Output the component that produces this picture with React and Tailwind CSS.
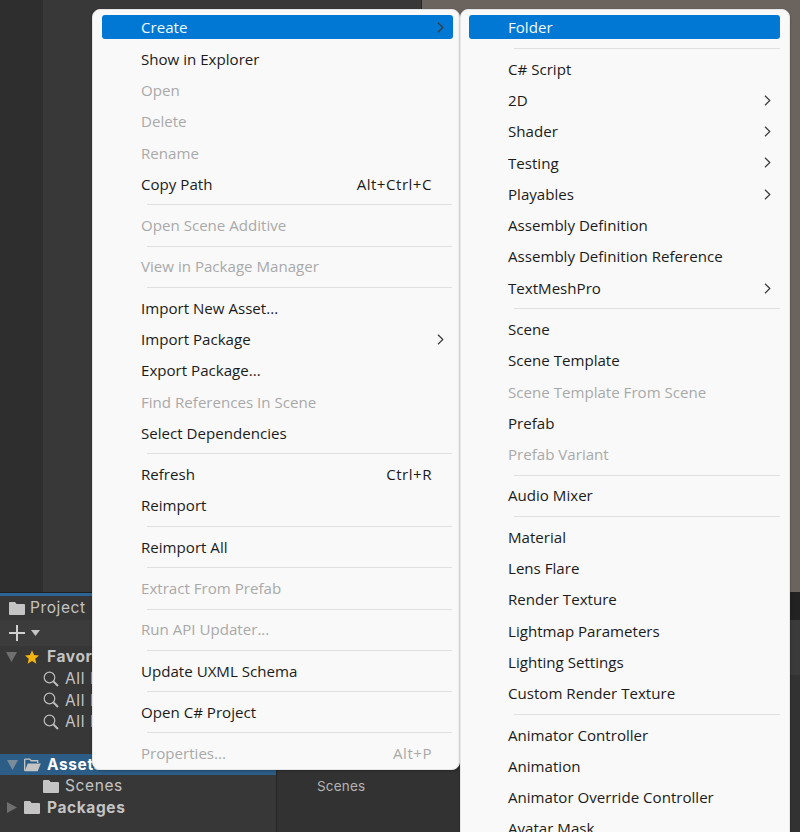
const mainItems = [
  { label: 'Create', arrow: true, active: true },
  { label: 'Show in Explorer' },
  { label: 'Open', off: true },
  { label: 'Delete', off: true },
  { label: 'Rename', off: true },
  { label: 'Copy Path', keys: 'Alt+Ctrl+C' },
  { sep: true },
  { label: 'Open Scene Additive', off: true },
  { sep: true },
  { label: 'View in Package Manager', off: true },
  { sep: true },
  { label: 'Import New Asset...' },
  { label: 'Import Package', arrow: true },
  { label: 'Export Package...' },
  { label: 'Find References In Scene', off: true },
  { label: 'Select Dependencies' },
  { sep: true },
  { label: 'Refresh', keys: 'Ctrl+R' },
  { label: 'Reimport' },
  { sep: true },
  { label: 'Reimport All' },
  { sep: true },
  { label: 'Extract From Prefab', off: true },
  { sep: true },
  { label: 'Run API Updater...', off: true },
  { sep: true },
  { label: 'Update UXML Schema' },
  { sep: true },
  { label: 'Open C# Project' },
  { sep: true },
  { label: 'Properties...', keys: 'Alt+P', off: true },
];

const subItems = [
  { label: 'Folder', active: true },
  { sep: true },
  { label: 'C# Script' },
  { label: '2D', arrow: true },
  { label: 'Shader', arrow: true },
  { label: 'Testing', arrow: true },
  { label: 'Playables', arrow: true },
  { label: 'Assembly Definition' },
  { label: 'Assembly Definition Reference' },
  { label: 'TextMeshPro', arrow: true },
  { sep: true },
  { label: 'Scene' },
  { label: 'Scene Template' },
  { label: 'Scene Template From Scene', off: true },
  { label: 'Prefab' },
  { label: 'Prefab Variant', off: true },
  { sep: true },
  { label: 'Audio Mixer' },
  { sep: true },
  { label: 'Material' },
  { label: 'Lens Flare' },
  { label: 'Render Texture' },
  { label: 'Lightmap Parameters' },
  { label: 'Lighting Settings' },
  { label: 'Custom Render Texture' },
  { sep: true },
  { label: 'Animator Controller' },
  { label: 'Animation' },
  { label: 'Animator Override Controller' },
  { label: 'Avatar Mask' },
];

function Chevron() {
  return (
    <svg width="7" height="11" viewBox="0 0 7 11" fill="none" stroke="currentColor" strokeWidth="1.2" className="text-[#3a3a3a]">
      <path d="M1 0.8 L5.8 5.5 L1 10.2" />
    </svg>
  );
}

function MenuRow({ item, sepRight }) {
  if (item.sep) {
    return <div className={`h-[10px] flex items-center pl-[45px] ${sepRight}`}><div className="h-px w-full bg-[#e0e0e0]"></div></div>;
  }
  const tone = item.active ? 'bg-[#0078d4] text-[#f2f8fd]' : item.off ? 'text-[#a9a9a9]' : 'text-[#1b1b1b]';
  return (
    <div className="h-[31.3px] flex items-center">
      <div className={`h-6 w-full mb-[1.3px] pt-[1.3px] rounded-[3px] flex items-center pl-[39px] pr-[9px] ${tone}`}>
        <span className="flex-1 whitespace-nowrap">{item.label}</span>
        {item.keys && <span className="pr-3 whitespace-nowrap tracking-[0.5px]">{item.keys}</span>}
        {item.arrow && <Chevron />}
      </div>
    </div>
  );
}

function FolderIcon({ className }) {
  return (
    <svg viewBox="0 0 16 13" className={className} fill="#c4c4c4">
      <path d="M0 1 Q0 0 1 0 H6 L7.5 2 H15 Q16 2 16 3 V12 Q16 13 15 13 H1 Q0 13 0 12 Z" />
    </svg>
  );
}

function OpenFolderIcon() {
  return (
    <svg viewBox="0 0 18 14" className="w-[17px] h-[14px]" fill="none">
      <path d="M0.7 13 V1.5 Q0.7 0.7 1.5 0.7 H6 L7.5 2.5 H14.5 V5" stroke="#c4c4c4" strokeWidth="1.4" />
      <path d="M0.7 13.5 L4 5.5 H17.8 L14.5 13.5 Z" fill="#c4c4c4" />
    </svg>
  );
}

function Triangle({ open, color = '#6f6f6f' }) {
  return open ? (
    <svg width="11" height="10" viewBox="0 0 11 10" fill={color}><path d="M0 0 H11 L5.5 10 Z" /></svg>
  ) : (
    <svg width="10" height="11" viewBox="0 0 10 11" fill={color}><path d="M0 0 L10 5.5 L0 11 Z" /></svg>
  );
}

function SearchRow({ label }) {
  return (
    <div className="h-[21.5px] flex items-center pl-[43px] gap-[6px]">
      <svg width="16" height="16" viewBox="0 0 16 16" fill="none" stroke="#bdbdbd" strokeWidth="1.2">
        <circle cx="6.5" cy="6.5" r="5.3" />
        <path d="M10.5 10.5 L15 15" strokeWidth="2" />
      </svg>
      <span>{label}</span>
    </div>
  );
}

export default function App() {
  return (
    <div className="relative w-[800px] h-[832px] overflow-hidden bg-[#333333] font-['Inter',sans-serif]">
      {/* editor behind the menu */}
      <div className="flex h-[592px]">
        <div className="w-[43px] bg-[#2e2e2e]"></div>
        <div className="w-[379px] bg-[#383838] border-r border-[#242424]"></div>
        <div className="flex-1 bg-[#6b645e]"></div>
      </div>
      <div className="flex h-[240px] text-[15.5px] tracking-[0.6px] text-[#c4c4c4]">
        <div className="w-[277px] bg-[#373737] border-r border-[#262626] whitespace-nowrap">
          <div className="h-1 border-t border-[#1f1f1f] bg-[#2d6496]"></div>
          <div className="h-6 flex items-center pl-[9px] gap-[5px]">
            <FolderIcon className="w-4 h-[13px]" />
            <span>Project</span>
          </div>
          <div className="h-[26px] flex items-center pl-[9px] gap-[6px] bg-[#3c3c3c]">
            <svg width="16" height="16" viewBox="0 0 16 16" stroke="#d0d0d0" strokeWidth="2"><path d="M8 0 V16 M0 8 H16" /></svg>
            <svg width="9" height="6" viewBox="0 0 9 6" fill="#c4c4c4"><path d="M0 0 H9 L4.5 6 Z" /></svg>
          </div>
          <div className="h-[22px] flex items-center pl-[6px] gap-[8px] font-bold">
            <Triangle open />
            <svg width="14" height="14" viewBox="0 0 24 23" fill="#f5b50f"><path d="M12 0 L15.5 8 L24 8.8 L17.6 14.5 L19.5 23 L12 18.5 L4.5 23 L6.4 14.5 L0 8.8 L8.5 8 Z" /></svg>
            <span>Favorites</span>
          </div>
          <SearchRow label="All Materials" />
          <SearchRow label="All Models" />
          <SearchRow label="All Prefabs" />
          <div className="h-[21.5px]"></div>
          <div className="h-[21px] flex items-center pl-[7px] gap-[6px] font-bold text-white bg-[#2c5d87]">
            <Triangle open color="#7a8b99" />
            <OpenFolderIcon />
            <span>Assets</span>
          </div>
          <div className="h-[22px] flex items-center pl-[43px] gap-[6px]">
            <FolderIcon className="w-4 h-[13px]" />
            <span>Scenes</span>
          </div>
          <div className="h-[21px] flex items-center pl-[7px] gap-[7px] font-bold">
            <Triangle color="#6f6f6f" />
            <FolderIcon className="w-4 h-[13px]" />
            <span>Packages</span>
          </div>
        </div>
        <div className="flex-1 flex flex-col bg-[#323232] text-[13.5px] tracking-[0.2px] text-[#b4b4b4]">
          <div className="h-7 bg-[#222222]"></div>
          <div className="h-[55px] bg-[#3a3a3a]"></div>
          <div className="pl-[40px] pt-[101px]">Scenes</div>
        </div>
      </div>

      {/* context menu */}
      <div className="absolute left-[92px] top-[9px] w-[368px] pt-[2px] pl-[9px] pr-[6px] h-[761px] bg-[#f9f9f9] rounded-lg border border-[#e6e6e6] box-border text-[15.1px] font-['Open_Sans',sans-serif] shadow-[0_1px_3px_rgba(0,0,0,0.25)]">
        {mainItems.map((item, i) => <MenuRow key={i} item={item} sepRight="pr-px" />)}
      </div>
      <div className="absolute left-[460px] top-[9px] w-[330px] h-[900px] pt-[2px] pl-[8px] pr-[9px] bg-[#f9f9f9] rounded-lg border border-[#e6e6e6] box-border text-[15.1px] font-['Open_Sans',sans-serif] shadow-[0_1px_3px_rgba(0,0,0,0.25)]">
        {subItems.map((item, i) => <MenuRow key={i} item={item} sepRight="pr-0" />)}
      </div>
    </div>
  );
}
